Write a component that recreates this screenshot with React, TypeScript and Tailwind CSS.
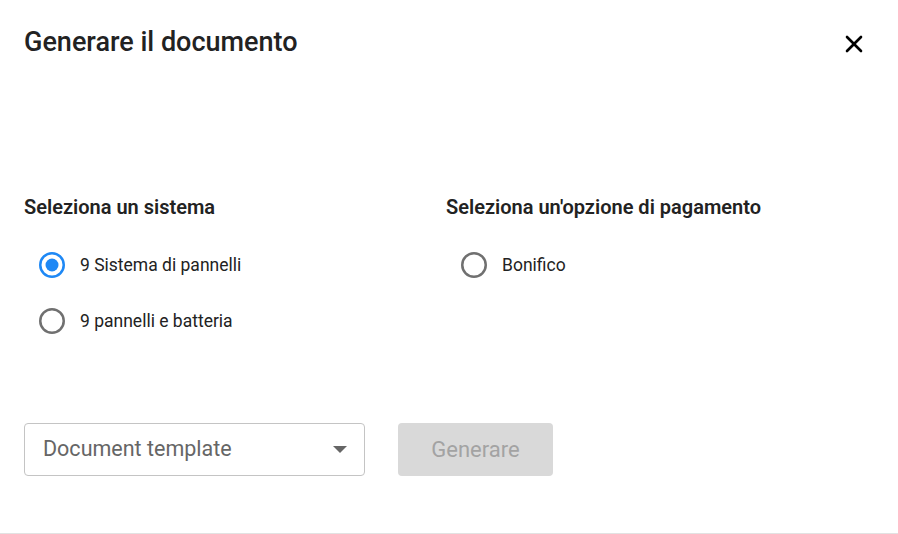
import { X } from 'lucide-react';

function Radio({ checked, label }: { checked?: boolean; label: string }) {
  return (
    <label className="flex items-center h-[56px]">
      <span className="w-[56px] flex items-center justify-center">
        <svg width="28" height="28" viewBox="0 0 28 28">
          <circle
            cx="14"
            cy="14"
            r="11.75"
            fill="none"
            stroke={checked ? '#1e88f5' : '#707070'}
            strokeWidth="2.5"
          />
          {checked && <circle cx="14" cy="14" r="6.5" fill="#1e88f5" />}
        </svg>
      </span>
      <span className="text-[17.5px] text-[#222]">{label}</span>
    </label>
  );
}

export default function App() {
  return (
    <div
      className="w-[898px] h-[534px] bg-white border-b border-[#e2e2e2] px-6 flex flex-col"
      style={{ fontFamily: 'Roboto, "Liberation Sans", sans-serif' }}
    >
      <div className="flex items-center justify-between pt-[25px]">
        <h1 className="text-[27px] font-medium text-[#222] leading-[34px]">Generare il documento</h1>
        <button className="mr-[6px] mt-[4px] text-black">
          <X size={28} strokeWidth={2.25} />
        </button>
      </div>

      <div className="grid grid-cols-[422px_1fr] mt-[136px]">
        <div>
          <h2 className="text-[20px] font-semibold text-[#222] leading-6">Seleziona un sistema</h2>
          <div className="mt-[18px]">
            <Radio checked label="9 Sistema di pannelli" />
            <Radio label="9 pannelli e batteria" />
          </div>
        </div>
        <div>
          <h2 className="text-[20px] font-semibold text-[#222] leading-6">Seleziona un'opzione di pagamento</h2>
          <div className="mt-[18px]">
            <Radio label="Bonifico" />
          </div>
        </div>
      </div>

      <div className="flex items-center gap-[33px] mt-[74px]">
        <div className="w-[341px] h-[53px] border border-[#c4c4c4] rounded-[4px] flex items-center justify-between pl-[18px] pr-[16px]">
          <span className="text-[21.5px] text-[#666]">Document template</span>
          <svg width="16" height="8" viewBox="0 0 16 8">
            <path d="M1 0 L15 0 L8 7 Z" fill="#666" />
          </svg>
        </div>
        <button className="w-[155px] h-[53px] rounded-[4px] bg-[#d9d9d9] text-[22px] text-[#a3a3a3]">
          Generare
        </button>
      </div>
    </div>
  );
}
